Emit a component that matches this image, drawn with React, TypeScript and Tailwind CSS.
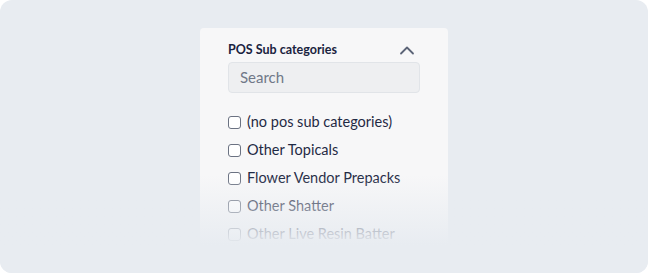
import React from "react";

const items = [
  "(no pos sub categories)",
  "Other Topicals",
  "Flower Vendor Prepacks",
  "Other Shatter",
  "Other Live Resin Batter",
];

export default function App() {
  return (
    <div className="w-[648px] h-[273px] bg-white" style={{ fontFamily: "Lato, 'Open Sans', sans-serif" }}>
      <div className="relative w-full h-full rounded-[12px] bg-[#e8ecf1] overflow-hidden flex justify-center">
        <div className="mt-[28px] w-[248px] h-[260px] bg-[#f7f7f8] rounded-t-[4px] px-[28px] pt-[13px]">
          <div className="flex items-center justify-between h-[18px]">
            <span className="text-[12.5px] font-bold text-[#1a2340]">POS Sub categories</span>
            <svg width="16" height="10" viewBox="0 0 16 10" className="mr-[5px]">
              <path d="M2 8.5 L8 2.5 L14 8.5" fill="none" stroke="#5c6477" strokeWidth="1.8" strokeLinecap="round" strokeLinejoin="round" />
            </svg>
          </div>
          <div className="mt-[3px] h-[31px] rounded-[4px] bg-[#eeeff1] border border-[#e1e4e8] flex items-center px-[11px]">
            <span className="text-[15px] text-[#707888]">Search</span>
          </div>
          <div className="mt-[15px] flex flex-col">
            {items.map((t) => (
              <div key={t} className="h-[28px] flex items-center gap-[6px]">
                <div className="w-[13px] h-[13px] rounded-[3px] border-[1.5px] border-[#6b7282] bg-white" />
                <span className="text-[14.5px] text-[#1f2a44] leading-none">{t}</span>
              </div>
            ))}
          </div>
        </div>
        <div className="pointer-events-none absolute left-0 right-0 top-[175px] h-[70px] bg-gradient-to-b from-[#e8ecf1]/0 to-[#e8ecf1]" />
        <div className="pointer-events-none absolute left-0 right-0 top-[245px] bottom-0 bg-[#e8ecf1]" />
      </div>
    </div>
  );
}
